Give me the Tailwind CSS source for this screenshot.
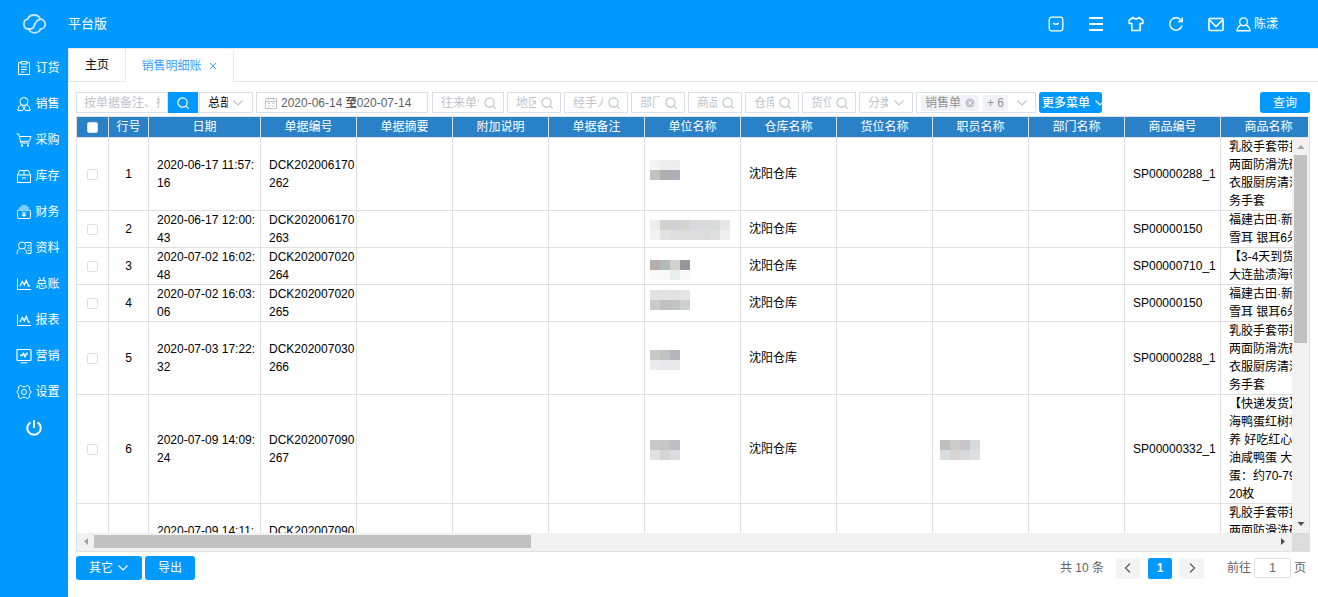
<!DOCTYPE html>
<html lang="zh-CN">
  <head>
    <meta charset="UTF-8" />
    <meta name="viewport" content="width=device-width, initial-scale=1.0" />
    <title>销售明细账</title>
    <script src="https://cdn.jsdelivr.net/npm/@tailwindcss/browser@4"></script>
  </head>
  <body class="h-screen flex flex-col overflow-hidden bg-white text-xs text-black font-['Liberation_Sans','Noto_Sans_CJK_SC',sans-serif]">
    <!-- shared icons -->
    <svg class="hidden">
      <symbol id="search" viewBox="0 0 12 12">
        <circle cx="5.5" cy="5.5" r="4.600" fill="none" stroke="currentColor" stroke-width="1.200" />
        <path d="M8.800 8.800L11.700 11.700" stroke="currentColor" stroke-width="1.200" />
      </symbol>
      <symbol id="down" viewBox="0 0 12 12">
        <path d="M1.500 3.500L6 8L10.500 3.500" fill="none" stroke="currentColor" stroke-width="1.200" />
      </symbol>
      <symbol id="chart" viewBox="0 0 16 16">
        <path d="M1.500 2.500v11H15" fill="none" stroke="currentColor" />
        <path d="M4 10l2.300-4.500 2 3.300 2-4.300 2.200 5.500h1.500" fill="none" stroke="currentColor" stroke-width="1.300" />
      </symbol>
    </svg>

    <header class="h-12 shrink-0 flex items-center bg-[#0099ff] text-white pr-10">
      <div class="w-[68px] flex justify-center">
        <svg class="w-6 h-5" viewBox="0 0 24 20" fill="none" stroke="#c9e4f6" stroke-width="1.800">
          <path d="M9 15H6.200A5 5 0 0 1 5.600 5.200C6.600 2.400 9 1 12 1c3 0 5.400 1.500 6.200 4.200A4.900 4.900 0 0 1 18.400 15C17.400 17.600 15.300 18.800 12.600 18.800 9.800 18.800 7.700 17.500 6.800 15" />
          <path d="M9 15c3.400-.7 3-3.500 4.400-6 .9-1.900 2.200-3.300 4.800-3.700" />
        </svg>
      </div>
      <h1 class="text-[13px]">平台版</h1>
      <nav class="ml-auto flex items-center">
        <button type="button" aria-label="应用" class="w-10 flex justify-center">
          <svg class="size-4" viewBox="0 0 16 16" fill="none" stroke="currentColor" stroke-width="1.300">
            <rect x="1.200" y="1.200" width="13.600" height="13.600" rx="2.500" />
            <path d="M5.300 6.800c.6 1.900 4.800 1.900 5.400 0" />
          </svg>
        </button>
        <button type="button" aria-label="菜单" class="w-10 flex justify-center">
          <svg class="size-4" viewBox="0 0 16 16" stroke="currentColor" stroke-width="2">
            <path d="M1 2h14M1 8h14M1 14h14" />
          </svg>
        </button>
        <button type="button" aria-label="换肤" class="w-10 flex justify-center">
          <svg class="size-4" viewBox="0 0 16 16" fill="none" stroke="currentColor" stroke-width="1.600" stroke-linejoin="round">
            <path d="M5 1.500L1.200 4.200v3.300h2.600v7h8.400v-7h2.600V4.200L11 1.500C10 3.300 6 3.300 5 1.500z" />
          </svg>
        </button>
        <button type="button" aria-label="刷新" class="w-10 flex justify-center">
          <svg class="size-4" viewBox="0 0 16 16" fill="none" stroke="currentColor" stroke-width="1.400">
            <path d="M14 9.500A6.200 6.200 0 1 1 13 4.300M14.200 1.500v4h-4" />
          </svg>
        </button>
        <button type="button" aria-label="消息" class="w-10 flex justify-center">
          <svg class="size-4" viewBox="0 0 16 16" fill="none" stroke="currentColor" stroke-width="1.600">
            <rect x="1" y="2.500" width="14" height="12" rx="1" />
            <path d="M1.500 4l6.500 6.500L14.500 4" />
          </svg>
        </button>
        <button type="button" class="flex items-center gap-[3px]">
          <svg class="size-[15px]" viewBox="0 0 15 15" fill="none" stroke="currentColor" stroke-width="1.400">
            <circle cx="7.500" cy="4.800" r="3.900" />
            <path d="M4.800 7.800C2.600 9 1.300 11 1 13.800h13C13.700 11 12.400 9 10.200 7.800" />
          </svg>
          陈漾
        </button>
      </nav>
    </header>

    <div class="flex-1 min-h-0 flex">
      <aside class="w-[68px] shrink-0 bg-[#0099ff] text-white pt-0.5">
        <nav class="flex flex-col">
          <a href="#" class="h-9 flex items-center justify-center gap-[3px] pl-2">
            <svg class="size-4" viewBox="0 0 16 16" fill="none" stroke="currentColor">
              <path d="M5 2.500H2.500v12h11v-12H11M5 1.500h6v2.500H5zM5 7h6M5 9.500h6M5 12h3.500" />
            </svg>
            订货
          </a>
          <a href="#" class="h-9 flex items-center justify-center gap-[3px] pl-2">
            <svg class="size-4" viewBox="0 0 16 16" fill="none" stroke="currentColor">
              <circle cx="8" cy="5.500" r="4" />
              <path d="M5.300 8.500C3 9.500 2 11.500 2 14.500h4.500L8 12.500l1.500 2H14c0-3-1-5-3.300-6M6 9l2 3.500L10 9" />
            </svg>
            销售
          </a>
          <a href="#" class="h-9 flex items-center justify-center gap-[3px] pl-2">
            <svg class="size-4" viewBox="0 0 16 16" fill="none" stroke="currentColor">
              <path d="M.5 2h2.300l2 9h8.700M3.500 4.500h11.500l-1.500 4.500-9 .500" />
              <path d="M5 13.500h2M11 13.500h2" stroke-width="2" />
            </svg>
            采购
          </a>
          <a href="#" class="h-9 flex items-center justify-center gap-[3px] pl-2">
            <svg class="size-4" viewBox="0 0 16 16" fill="none" stroke="currentColor">
              <path d="M1.500 7l2-4.500h9l2 4.500v7.500h-13zM1.500 7h13M8 2.500V7M6 10h4" />
            </svg>
            库存
          </a>
          <a href="#" class="h-9 flex items-center justify-center gap-[3px] pl-2">
            <svg class="size-4" viewBox="0 0 16 16" fill="none" stroke="currentColor">
              <rect x="1.500" y="6" width="13" height="8.500" rx="1.500" />
              <path d="M3 4h10M5 2h6M6.200 7.500L8 9.500l1.800-2M8 9.500v3.500M6.200 10h3.600M6.200 11.500h3.600" />
            </svg>
            财务
          </a>
          <a href="#" class="h-9 flex items-center justify-center gap-[3px] pl-2">
            <svg class="size-4" viewBox="0 0 16 16" fill="none" stroke="currentColor">
              <circle cx="6" cy="5.500" r="3.500" />
              <path d="M4 8.500C2 9.500 1 11.500 1 14M8 8.500c2 1 3 3 3 5.500M9 2.500h6v11h-3M11.500 5.500h2M11.500 8h2M12 10.500h1.500" />
            </svg>
            资料
          </a>
          <a href="#" class="h-9 flex items-center justify-center gap-[3px] pl-2">
            <svg class="size-4"><use href="#chart" /></svg>
            总账
          </a>
          <a href="#" class="h-9 flex items-center justify-center gap-[3px] pl-2">
            <svg class="size-4"><use href="#chart" /></svg>
            报表
          </a>
          <a href="#" class="h-9 flex items-center justify-center gap-[3px] pl-2">
            <svg class="size-4" viewBox="0 0 16 16" fill="none" stroke="currentColor">
              <rect x="1" y="1.500" width="14" height="11" rx="1" stroke-width="1.200" />
              <path d="M4 7.500h2l1.500-2 1.500 3 1.500-3H12" stroke-width="1.500" />
              <path d="M4.500 14.800h7" />
            </svg>
            营销
          </a>
          <a href="#" class="h-9 flex items-center justify-center gap-[3px] pl-2">
            <svg class="size-4" viewBox="0 0 16 16" fill="none" stroke="currentColor">
              <path d="M5 1.300L6.500 2.800h3L11 1.300 13.500 2.800 13.300 5.500 15.300 8 13.300 10.500 13.500 13.200 11 14.700 9.500 13.200h-3L5 14.700 2.500 13.200 2.700 10.500.7 8 2.700 5.500 2.500 2.800z" stroke-linejoin="round" />
              <circle cx="8" cy="8" r="2.500" />
            </svg>
            设置
          </a>
          <button type="button" aria-label="退出" class="h-9 flex items-center justify-center">
            <svg class="size-4" viewBox="0 0 16 16" fill="none" stroke="currentColor" stroke-width="2">
              <path d="M4.500 2.300a6.700 6.700 0 1 0 7 0M8 .300v7.700" />
            </svg>
          </button>
        </nav>
      </aside>

      <main class="flex-1 min-w-0 flex flex-col border-t border-[#e4e7ed]">
        <div class="h-[33px] shrink-0 flex">
          <button type="button" class="w-[58px] border-x border-b border-[#e4e7ed] rounded-tl">主页</button>
          <button type="button" class="w-[108px] border-r border-[#e4e7ed] rounded-tr text-[#409eff] flex items-center justify-center gap-1.5">
            销售明细账
            <svg class="size-2.5" viewBox="0 0 10 10" stroke="currentColor"><path d="M2 2l6 6M8 2l-6 6" /></svg>
          </button>
          <div class="flex-1 border-b border-[#e4e7ed]"></div>
        </div>

        <section class="flex-1 min-h-0 flex flex-col px-2 pt-2.5 pb-[17px]">
          <form class="h-[21px] shrink-0 flex gap-[3px] text-[#c0c4cc]" onsubmit="return false">
            <div class="flex">
              <input aria-label="关键字" placeholder="按单据备注、摘要" class="w-[92px] border border-[#dcdfe6] px-[7px] placeholder:text-[#c0c4cc] text-[#606266]" />
              <button type="submit" aria-label="搜索" class="w-[30px] mr-px bg-[#0099ff] text-white flex items-center justify-center">
                <svg class="size-3"><use href="#search" /></svg>
              </button>
              <div class="w-[54px] border border-[#dcdfe6] px-2 flex items-center gap-1">
                <select aria-label="机构" class="appearance-none flex-1 min-w-0 text-black"><option>总部</option></select>
                <svg class="size-3 shrink-0"><use href="#down" /></svg>
              </div>
            </div>
            <div class="w-[172px] mr-px border border-[#dcdfe6] px-2 flex items-center text-[#606266]">
              <svg class="size-3 mr-1 shrink-0 text-[#c0c4cc]" viewBox="0 0 12 12" fill="none" stroke="currentColor">
                <path d="M.5 1.500h11v10H.5zM.5 4.500h11M3.500 0v3M8.500 0v3M3 6.500h2M7 6.500h2M3 9h2M7 9h2" />
              </svg>
              <input aria-label="开始日期" value="2020-06-14" class="w-[61px]" />
              <span class="w-2 pl-[3px] whitespace-nowrap text-[#303133]">至</span>
              <input aria-label="结束日期" value="2020-07-14" class="w-[62px]" />
            </div>
            <div class="w-[72px] border border-[#dcdfe6] pl-2 pr-[7px] flex items-center gap-[5px]">
              <input aria-label="往来单位" placeholder="往来单位" class="flex-1 min-w-0 placeholder:text-[#c0c4cc]" />
              <svg class="size-3 shrink-0"><use href="#search" /></svg>
            </div>
            <div class="w-[54px] border border-[#dcdfe6] pl-2 pr-[7px] flex items-center gap-[5px]">
              <input aria-label="地区" placeholder="地区" class="flex-1 min-w-0 placeholder:text-[#c0c4cc]" />
              <svg class="size-3 shrink-0"><use href="#search" /></svg>
            </div>
            <div class="w-16 border border-[#dcdfe6] pl-2 pr-[7px] flex items-center gap-[5px]">
              <input aria-label="经手人" placeholder="经手人" class="flex-1 min-w-0 placeholder:text-[#c0c4cc]" />
              <svg class="size-3 shrink-0"><use href="#search" /></svg>
            </div>
            <div class="w-[54px] border border-[#dcdfe6] pl-2 pr-[7px] flex items-center gap-[5px]">
              <input aria-label="部门" placeholder="部门" class="flex-1 min-w-0 placeholder:text-[#c0c4cc]" />
              <svg class="size-3 shrink-0"><use href="#search" /></svg>
            </div>
            <div class="w-[54px] border border-[#dcdfe6] pl-2 pr-[7px] flex items-center gap-[5px]">
              <input aria-label="商品" placeholder="商品" class="flex-1 min-w-0 placeholder:text-[#c0c4cc]" />
              <svg class="size-3 shrink-0"><use href="#search" /></svg>
            </div>
            <div class="w-[54px] border border-[#dcdfe6] pl-2 pr-[7px] flex items-center gap-[5px]">
              <input aria-label="仓库" placeholder="仓库" class="flex-1 min-w-0 placeholder:text-[#c0c4cc]" />
              <svg class="size-3 shrink-0"><use href="#search" /></svg>
            </div>
            <div class="w-[54px] border border-[#dcdfe6] pl-2 pr-[7px] flex items-center gap-[5px]">
              <input aria-label="货位" placeholder="货位" class="flex-1 min-w-0 placeholder:text-[#c0c4cc]" />
              <svg class="size-3 shrink-0"><use href="#search" /></svg>
            </div>
            <div class="w-[54px] border border-[#dcdfe6] pl-2 pr-[7px] flex items-center gap-[5px]">
              <select aria-label="分类" class="appearance-none flex-1 min-w-0"><option>分类</option></select>
              <svg class="size-3 shrink-0"><use href="#down" /></svg>
            </div>
            <button type="button" aria-label="单据类型" class="w-[120px] border border-[#dcdfe6] pl-1 pr-[7px] flex items-center gap-1 text-[#909399]">
              <span class="h-4 bg-[#f0f2f5] rounded-xs px-1 flex items-center gap-1">
                销售单
                <svg class="size-2.5" viewBox="0 0 10 10">
                  <circle cx="5" cy="5" r="4.500" fill="#c0c4cc" />
                  <path d="M3.300 3.300l3.400 3.400M6.700 3.300L3.300 6.700" stroke="#fff" />
                </svg>
              </span>
              <span class="h-4 bg-[#f0f2f5] rounded-xs px-1 flex items-center">+ 6</span>
              <svg class="size-3 ml-auto text-[#c0c4cc]"><use href="#down" /></svg>
            </button>
            <button type="button" class="w-[63px] bg-[#0099ff] text-white rounded-[3px] pl-[3px] flex items-center gap-1 overflow-hidden whitespace-nowrap font-medium">
              更多菜单
              <svg class="size-3 shrink-0"><use href="#down" /></svg>
            </button>
            <button type="submit" class="w-[50px] ml-auto bg-[#0099ff] text-white rounded-[3px]">查询</button>
          </form>

          <div class="flex-1 min-h-0 mt-[3px] flex flex-col border border-[#dfe1e8]">
            <div class="shrink-0 mr-px overflow-hidden">
              <table class="table-fixed w-[1240px] border-separate border-spacing-0">
                <colgroup id="headCols"></colgroup>
                <thead>
                  <tr id="headRow" class="h-[21px] bg-[#2981c8] text-white"></tr>
                </thead>
              </table>
            </div>
            <div class="flex-1 min-h-0 flex">
              <div class="flex-1 min-w-0 overflow-hidden">
                <table class="table-fixed w-[1240px] border-separate border-spacing-0">
                  <colgroup id="bodyCols"></colgroup>
                  <tbody id="rows"></tbody>
                </table>
              </div>
              <div class="w-[17px] shrink-0 bg-[#f1f1f1] flex flex-col items-center">
                <svg class="w-4 h-[17px]" viewBox="0 0 16 17"><path d="M4.500 11h7L8 7z" fill="#a3a3a3" /></svg>
                <div class="flex-1 w-[13px]"><div class="h-[52%] bg-[#c1c1c1]"></div></div>
                <svg class="w-4 h-[17px]" viewBox="0 0 16 17"><path d="M4.500 6h7L8 10z" fill="#505050" /></svg>
              </div>
            </div>
            <div class="h-[18px] shrink-0 flex bg-[#f1f1f1]">
              <svg class="w-[17px] h-[17px]" viewBox="0 0 17 17"><path d="M11 5v7L7 8.500z" fill="#a3a3a3" /></svg>
              <div class="flex-1 flex pt-0.5"><div class="w-[37%] h-[13px] bg-[#c1c1c1]"></div></div>
              <svg class="w-[17px] h-[17px]" viewBox="0 0 17 17"><path d="M6 5v7l4-3.500z" fill="#505050" /></svg>
              <div class="w-[17px] bg-[#dcdcdc]"></div>
            </div>
          </div>

          <footer class="h-7 shrink-0 pt-1 flex items-center gap-[3px] text-[#606266]">
            <button type="button" class="w-[66px] h-6 bg-[#0099ff] text-white rounded-[3px] flex items-center justify-center gap-1">
              其它
              <svg class="size-3"><use href="#down" /></svg>
            </button>
            <button type="button" class="w-[50px] h-6 bg-[#0099ff] text-white rounded-[3px]">导出</button>
            <div class="ml-auto pr-1 flex items-center gap-2">
              <span class="mr-1">共 10 条</span>
              <button type="button" aria-label="上一页" class="w-6 h-[21px] bg-[#f4f4f5] rounded-xs flex items-center justify-center">
                <svg class="size-3" viewBox="0 0 12 12" fill="none" stroke="currentColor" stroke-width="1.400"><path d="M8 1.500L3.500 6L8 10.500" /></svg>
              </button>
              <button type="button" class="w-6 h-[21px] bg-[#0099ff] text-white font-bold rounded-xs">1</button>
              <button type="button" aria-label="下一页" class="w-6 h-[21px] bg-[#f4f4f5] rounded-xs flex items-center justify-center">
                <svg class="size-3" viewBox="0 0 12 12" fill="none" stroke="currentColor" stroke-width="1.400"><path d="M4 1.500L8.500 6L4 10.500" /></svg>
              </button>
              <div class="ml-[15px] flex items-center gap-[3px]">
                <label for="page">前往</label>
                <input id="page" value="1" class="w-[37px] h-5 border border-[#dcdfe6] rounded-xs text-center" />
                <span>页</span>
              </div>
            </div>
          </footer>
        </section>
      </main>
    </div>

    <script>
      const widths = [32, 40, 112, 96, 96, 96, 96, 96, 96, 96, 96, 96, 96, 96];
      const heads = ["行号", "日期", "单据编号", "单据摘要", "附加说明", "单据备注", "单位名称", "仓库名称", "货位名称", "职员名称", "部门名称", "商品编号", "商品名称"];

      const glove = "乳胶手套带扣两面防滑洗碗衣服厨房清洁务手套";
      const fungus = "福建古田·新鲜雪耳 银耳6朵";
      // unit / staff: masked names, top offset and two lines of 10px tiles
      const rows = [
        {
          date: "2020-06-17 11:57:16", no: "DCK202006170262", code: "SP00000288_1", name: glove,
          unit: [0, ["#f3f3f3", "#eeeeef", "#ededf1"], ["#c3c2bd", "#aeaeb0", "#afaeb8"]],
        },
        {
          date: "2020-06-17 12:00:43", no: "DCK202006170263", code: "SP00000150", name: fungus,
          unit: [5, ["#eceee8", "#d3d1cd", "#cfd2d4", "#d5d4d0", "#d6d9dd", "#dadada", "#d5dbd5", "#e6e6e6"], ["#f2f2f0", "#e2e2e2", "#dfdfdf", "#dcdcdc", "#dcdcdc", "#dcdcdc", "#dfdfdf", "#efefef"]],
        },
        {
          date: "2020-07-02 16:02:48", no: "DCK202007020264", code: "SP00000710_1", name: "【3-4天到货】大连盐渍海带",
          unit: [8, ["#b5ada7", "#b0bab9", "#d2d1ce", "#97969b"], ["#fafafa", "#f7faf9", "#e8eded", "#f8f8f8"]],
        },
        {
          date: "2020-07-02 16:03:06", no: "DCK202007020265", code: "SP00000150", name: fungus,
          unit: [1, ["#e2e2e2", "#e3e3e3", "#e2e2e2", "#e5e5e5"], ["#cfcac6", "#bfc0c4", "#c2c3c5", "#ccd1ce"]],
        },
        {
          date: "2020-07-03 17:22:32", no: "DCK202007030266", code: "SP00000288_1", name: glove,
          unit: [6, ["#c9c8c4", "#c0c4c1", "#b5b6c0"], ["#ececec", "#e9e9ec", "#e9e9ec"]],
        },
        {
          date: "2020-07-09 14:09:24", no: "DCK202007090267", code: "SP00000332_1", name: "【快递发货】海鸭蛋红树林养 好吃红心流油咸鸭蛋 大鸭蛋：约70-79g 20枚",
          unit: [5, ["#cbc8c8", "#c5c7c6", "#bfbec6"], ["#e2e2e2", "#d5d5d5", "#dcdce0"]],
          staff: [5, ["#bfbfbe", "#cdcaca", "#c9c4c8", "#d5dadd"], ["#d9dfe0", "#d9d3d0", "#d4dade", "#dedede"]],
        },
        {
          date: "2020-07-09 14:11:02", no: "DCK202007090268", code: "", name: glove,
        },
      ];

      const cols = widths.map((w) => `<col style="width:${w}px">`).join("");
      document.getElementById("headCols").innerHTML = cols;
      document.getElementById("bodyCols").innerHTML = cols;

      const box = (label) =>
        `<input type="checkbox" aria-label="${label}" class="block mx-auto size-[11px] appearance-none bg-white border border-[#dcdfe6] rounded-xs">`;

      document.getElementById("headRow").innerHTML =
        `<th class="p-0 border-r border-b border-[#dfdfdf]">${box("全选")}</th>` +
        heads
          .map((h) => `<th class="p-0 border-r border-b border-[#dfdfdf] font-normal leading-5">${h}</th>`)
          .join("");

      function mask(data) {
        if (!data) return "";
        const [top, ...lines] = data;
        const tiles = lines
          .map((line, y) =>
            line.map((c, x) => `<rect x="${x * 10}" y="${top + y * 10}" width="10" height="10" fill="${c}"/>`).join("")
          )
          .join("");
        return `<svg class="block" width="${lines[0].length * 10}" height="28" shape-rendering="crispEdges">${tiles}</svg>`;
      }

      const td = (content) =>
        `<td class="pl-2 pr-0 py-0 border-r border-b border-[#dfdfdf] break-all">${content}</td>`;

      document.getElementById("rows").innerHTML = rows
        .map(
          (r, i) => `
        <tr class="leading-[18px]">
          <td class="p-0 border-r border-b border-[#dfdfdf]">${box("选择第" + (i + 1) + "行")}</td>
          <td class="p-0 border-r border-b border-[#dfdfdf] text-center">${i + 1}</td>
          ${td(r.date)}${td(r.no)}${td("")}${td("")}${td("")}
          <td class="px-[5px] py-0 border-r border-b border-[#dfdfdf]">${mask(r.unit)}</td>
          ${td("沈阳仓库")}${td("")}
          <td class="px-[7px] py-0 border-r border-b border-[#dfdfdf]">${mask(r.staff)}</td>
          ${td("")}${td(r.code)}
          <td class="px-2 py-0 border-r border-b border-[#dfdfdf] break-all">${r.name}</td>
        </tr>`
        )
        .join("");
    </script>
  </body>
</html>
